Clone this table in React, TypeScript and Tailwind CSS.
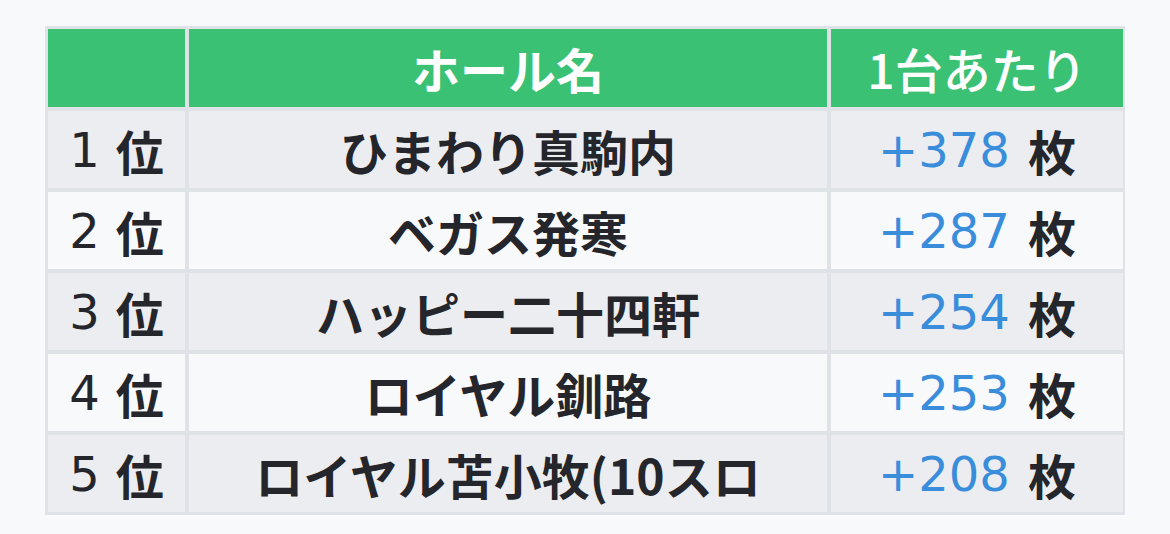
import React from 'react';

const rows = [
  { rank: 1, hall: 'ひまわり真駒内', diff: '+378' },
  { rank: 2, hall: 'ベガス発寒', diff: '+287' },
  { rank: 3, hall: 'ハッピー二十四軒', diff: '+254' },
  { rank: 4, hall: 'ロイヤル釧路', diff: '+253' },
  { rank: 5, hall: 'ロイヤル苫小牧(10スロ', diff: '+208' },
];

const latin = { fontFamily: '"DejaVu Sans", "Noto Sans CJK JP", sans-serif' };

export default function App() {
  return (
    <div
      className="w-[1170px] h-[534px] bg-[#f8f9fb] pt-[26px] pl-[45px]"
      style={{ fontFamily: '"Noto Sans CJK JP", "Noto Sans", sans-serif' }}
    >
      <div className="w-[1080px] bg-[#dfe2e6] p-[3px] grid grid-cols-[137px_638px_292px] gap-[4px] text-[48px] leading-none text-[#24262b]">
        {/* Header */}
        <div className="h-[78px] bg-[#3bc174]" />
        <div className="h-[78px] bg-[#3bc174] flex items-center justify-center font-bold text-white">
          ホール名
        </div>
        <div className="h-[78px] bg-[#3bc174] flex items-center justify-center font-medium text-white">
          1台あたり
        </div>

        {/* Rows */}
        {rows.map((r, i) => {
          const bg = i % 2 === 0 ? 'bg-[#ecedf0]' : 'bg-[#f8f9fb]';
          return (
            <React.Fragment key={r.rank}>
              <div className={`h-[77px] ${bg} flex items-center justify-center font-bold`}>
                <span className="font-normal" style={latin}>{r.rank}</span>
                <span className="ml-[16px]">位</span>
              </div>
              <div className={`h-[77px] ${bg} flex items-center justify-center font-bold whitespace-nowrap overflow-hidden`}>
                {r.hall}
              </div>
              <div className={`h-[77px] ${bg} flex items-center justify-center`}>
                <span className="text-[#3a8ddb] font-normal" style={latin}>{r.diff}</span>
                <span className="font-bold ml-[18px]">枚</span>
              </div>
            </React.Fragment>
          );
        })}
      </div>
    </div>
  );
}
